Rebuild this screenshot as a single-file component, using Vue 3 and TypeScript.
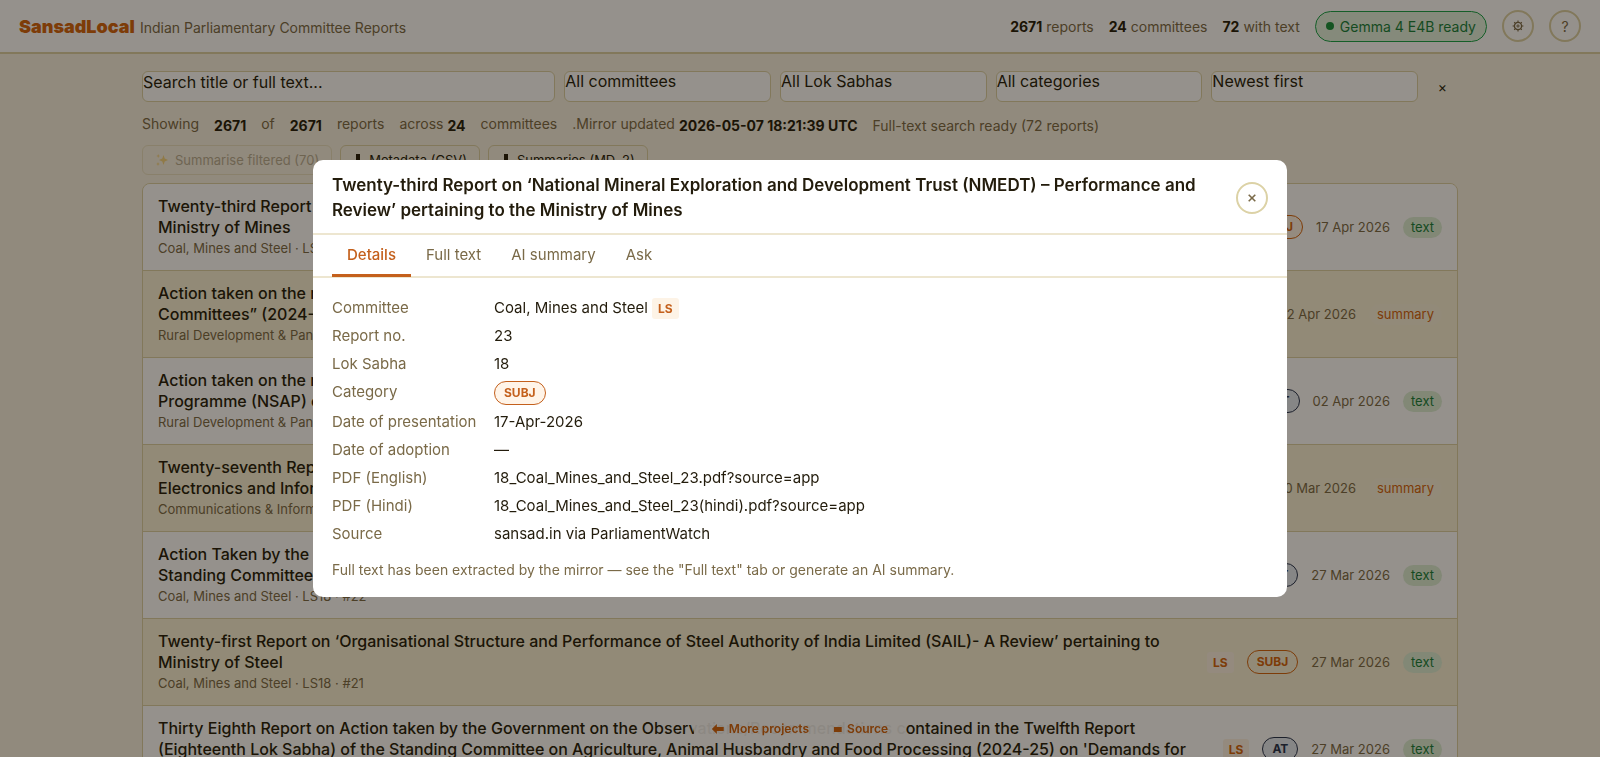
<script setup lang="ts">
import { ref } from 'vue'

interface Report {
  lines: string[]
  meta: string
  category: 'SUBJ' | 'AT'
  date: string
  badge: 'text' | 'summary'
}

const reports: Report[] = [
  {
    lines: ['Twenty-third Report on ‘National Mineral Exploration and Development Trust (NMEDT)', 'Ministry of Mines'],
    meta: 'Coal, Mines and Steel · LS18 · #23', category: 'SUBJ', date: '17 Apr 2026', badge: 'text',
  },
  {
    lines: ['Action taken on the recommendations contained in the Report', 'Committees” (2024-25)'],
    meta: 'Rural Development & Panchayati Raj · LS18', category: 'AT', date: '02 Apr 2026', badge: 'summary',
  },
  {
    lines: ['Action taken on the recommendations contained in the Report', 'Programme (NSAP) of the Ministry'],
    meta: 'Rural Development & Panchayati Raj · LS18', category: 'AT', date: '02 Apr 2026', badge: 'text',
  },
  {
    lines: ['Twenty-seventh Report of the Committee', 'Electronics and Information Technology'],
    meta: 'Communications & Information Technology · LS18', category: 'AT', date: '30 Mar 2026', badge: 'summary',
  },
  {
    lines: ['Action Taken by the Government on the Report', 'Standing Committee on Coal, Mines and Steel'],
    meta: 'Coal, Mines and Steel · LS18 · #22', category: 'AT', date: '27 Mar 2026', badge: 'text',
  },
  {
    lines: ['Twenty-first Report on ‘Organisational Structure and Performance of Steel Authority of India Limited (SAIL)- A Review’ pertaining to', 'Ministry of Steel'],
    meta: 'Coal, Mines and Steel · LS18 · #21', category: 'SUBJ', date: '27 Mar 2026', badge: 'text',
  },
  {
    lines: ['Thirty Eighth Report on Action taken by the Government on the Observations/Recommendations contained in the Twelfth Report', "(Eighteenth Lok Sabha) of the Standing Committee on Agriculture, Animal Husbandry and Food Processing (2024-25) on 'Demands for"],
    meta: 'Agriculture, Animal Husbandry and Food Processing · LS18 · #38', category: 'AT', date: '27 Mar 2026', badge: 'text',
  },
]

const filters = [
  { label: 'Committee', value: 'All committees' },
  { label: 'Lok Sabha', value: 'All Lok Sabhas' },
  { label: 'Category', value: 'All categories' },
  { label: 'Sort order', value: 'Newest first' },
]

const tabs = ['Details', 'Full text', 'AI summary', 'Ask']
const activeTab = ref('Details')
const query = ref('')
</script>

<template>
  <div class="page">
    <header class="topbar">
      <div class="brand">
        <span class="logo">SansadLocal</span>
        <span class="tagline">Indian Parliamentary Committee Reports</span>
      </div>
      <div class="stats">
        <span><b>2671</b> reports</span>
        <span><b>24</b> committees</span>
        <span><b>72</b> with text</span>
        <button class="model" type="button"><i class="dot"></i>Gemma 4 E4B ready</button>
        <button class="round" type="button" aria-label="Settings">
          <svg width="12" height="12" viewBox="0 0 12 12" fill="none" stroke="currentColor">
            <circle cx="6" cy="6" r="3.6" stroke-width="1.3" />
            <circle cx="6" cy="6" r="1.1" stroke-width="1" />
            <path d="M6 .6v1.6M6 9.8v1.6M.6 6h1.6M9.8 6h1.6M2.2 2.2l1.1 1.1M8.7 8.7l1.1 1.1M9.8 2.2L8.7 3.3M3.3 8.7L2.2 9.8" stroke-width="1.1" />
          </svg>
        </button>
        <button class="round" type="button" aria-label="Help">?</button>
      </div>
    </header>

    <main class="content">
      <form class="filters" @submit.prevent>
        <input v-model="query" class="field" type="text" aria-label="Search" placeholder="Search title or full text..." />
        <select v-for="f in filters" :key="f.label" class="field" :aria-label="f.label">
          <option>{{ f.value }}</option>
        </select>
        <button class="clear" type="reset" aria-label="Clear filters">×</button>
      </form>

      <div class="status">
        <span>Showing</span><b>2671</b><span>of</span><b>2671</b><span>reports</span>
        <span class="pair"><span>across</span><b>24</b></span>
        <span>committees</span>
        <span class="pair"><span>.Mirror updated</span><b>2026-05-07 18:21:39 UTC</b></span>
        <span class="hint">Full-text search ready (72 reports)</span>
      </div>

      <div class="actions">
        <button type="button" disabled>
          <svg width="14" height="14" viewBox="0 0 14 14" fill="#f5b921">
            <path d="M8.5 2l1.2 3.6 3.3 1.4-3.3 1.4L8.5 12 7.3 8.4 4 7l3.3-1.4zM3.2 1l.5 1.5 1.3.5-1.3.5-.5 1.5-.5-1.5L1.4 3l1.3-.5zM3 9l.5 1.5 1.3.5-1.3.5L3 13l-.5-1.5-1.3-.5 1.3-.5z" />
          </svg>
          Summarise filtered (70)
        </button>
        <button v-for="a in ['Metadata (CSV)', 'Summaries (MD, 2)']" :key="a" type="button">
          <svg width="10" height="14" viewBox="0 0 10 14" fill="currentColor"><path d="M3 1h4v8h3l-5 5-5-5h3z" /></svg>
          {{ a }}
        </button>
      </div>

      <ul class="list">
        <li v-for="r in reports" :key="r.meta + r.lines[1]" class="row">
          <div class="info">
            <h3><span v-for="line in r.lines" :key="line">{{ line }}</span></h3>
            <p>{{ r.meta }}</p>
          </div>
          <span class="house">LS</span>
          <span class="pill" :class="r.category.toLowerCase()">{{ r.category }}</span>
          <time>{{ r.date }}</time>
          <span class="badge" :class="r.badge">{{ r.badge }}</span>
        </li>
      </ul>
    </main>

    <nav class="links">
      <a href="#projects">
        <svg width="12" height="10" viewBox="0 0 12 10" fill="currentColor"><path d="M0 5l5-5v3h7v4H5v3z" /></svg>
        More projects
      </a>
      <a href="#source">
        <svg width="8" height="10" viewBox="0 0 8 10" fill="currentColor"><path d="M0 3h8v5H0z" /></svg>
        Source
      </a>
    </nav>

    <div class="overlay">
      <section class="modal" role="dialog" aria-modal="true" aria-labelledby="report-title">
        <header class="modal-head">
          <h2 id="report-title">
            Twenty-third Report on ‘National Mineral Exploration and Development Trust (NMEDT) – Performance and<br />
            Review’ pertaining to the Ministry of Mines
          </h2>
          <button class="round" type="button" aria-label="Close">
            <svg width="10" height="10" viewBox="0 0 10 10" stroke="currentColor" stroke-width="1.6"><path d="M1.7 1.7l6.6 6.6M8.3 1.7L1.7 8.3" /></svg>
          </button>
        </header>
        <div class="tabs" role="tablist">
          <button
            v-for="t in tabs" :key="t" type="button" role="tab" :aria-selected="t === activeTab"
            :class="{ active: t === activeTab }" @click="activeTab = t"
          >{{ t }}</button>
        </div>
        <div class="modal-body">
          <dl>
            <dt>Committee</dt><dd>Coal, Mines and Steel <span class="house">LS</span></dd>
            <dt>Report no.</dt><dd>23</dd>
            <dt>Lok Sabha</dt><dd>18</dd>
            <dt>Category</dt><dd><span class="pill subj">SUBJ</span></dd>
            <dt>Date of presentation</dt><dd>17-Apr-2026</dd>
            <dt>Date of adoption</dt><dd>—</dd>
            <dt>PDF (English)</dt><dd><a href="#pdf-en">18_Coal_Mines_and_Steel_23.pdf?source=app</a></dd>
            <dt>PDF (Hindi)</dt><dd><a href="#pdf-hi">18_Coal_Mines_and_Steel_23(hindi).pdf?source=app</a></dd>
            <dt>Source</dt><dd><a href="#sansad">sansad.in via ParliamentWatch</a></dd>
          </dl>
          <p>Full text has been extracted by the mirror — see the "Full text" tab or generate an AI summary.</p>
        </div>
      </section>
    </div>
  </div>
</template>

<style>
body {
  margin: 0;
  background: #f8f2e3;
  overflow: hidden;
}
</style>

<style scoped>
.page {
  --ink: #231c0c;
  --muted: #7a6a48;
  --line: #dcd2a6;
  --orange: #d4640f;
  height: 100vh;
  overflow: hidden;
  background: #f8f2e3;
  color: var(--ink);
  font-family: Inter, "Liberation Sans", sans-serif;
  font-size: 14px;
}
.page *, .page { box-sizing: border-box; }
button, input, select { font: inherit; color: inherit; margin: 0; }
button { cursor: pointer; }
a { color: inherit; text-decoration: none; }
b { font-weight: 700; color: var(--ink); }

.topbar {
  display: flex;
  align-items: center;
  justify-content: space-between;
  height: 54px;
  padding: 0 19px;
  background: #fff;
  border-bottom: 2px solid var(--line);
  color: var(--muted);
}
.brand { display: flex; align-items: baseline; gap: 5px; }
.logo { font-size: 18px; font-weight: 900; color: var(--orange); }
.stats { display: flex; align-items: center; gap: 15px; }
.stats > span { white-space: nowrap; }
.round {
  display: flex;
  align-items: center;
  justify-content: center;
  flex: none;
  width: 32px;
  height: 32px;
  padding: 0;
  border: 2px solid var(--line);
  border-radius: 50%;
  background: #fff;
  color: var(--muted);
}
.model {
  display: flex;
  align-items: center;
  gap: 6px;
  height: 31px;
  padding: 0 10px;
  border: 1px solid #16a34a;
  border-radius: 16px;
  background: #e2f3e0;
  color: #15803d;
}
.dot { width: 8px; height: 8px; border-radius: 50%; background: #15903d; }

.content { width: calc(100% - 48px); max-width: 1316px; margin: 0 auto; padding-top: 17px; }
.filters { display: grid; grid-template-columns: 2fr repeat(4, 1fr) 31px; gap: 9px; }
.field {
  min-width: 0;
  height: 31px;
  padding: 0 0 10px;
  border: 1px solid var(--line);
  border-radius: 6px;
  background: #fff;
  font-size: 16px;
  line-height: 19px;
  appearance: none;
  outline: none;
}
.field::placeholder { color: var(--ink); opacity: 1; }
.clear { border: 0; padding: 0; background: none; }

.status {
  display: flex;
  gap: 15px;
  margin-top: 12px;
  line-height: 20px;
  white-space: nowrap;
  color: var(--muted);
}
.status b, .status .hint { padding-top: 2px; }
.pair { display: flex; gap: 4px; }

.actions { display: flex; gap: 8px; margin-top: 9px; }
.actions button {
  display: flex;
  align-items: center;
  gap: 6px;
  height: 30px;
  padding: 0 12px;
  border: 1px solid var(--line);
  border-radius: 6px;
  background: transparent;
  font-size: 13px;
}
.actions button:disabled { opacity: 0.5; color: var(--muted); }

.list {
  margin: 8px 0 0;
  padding: 0;
  list-style: none;
  border: 1px solid var(--line);
  border-radius: 8px;
  overflow: hidden;
}
.row {
  display: flex;
  align-items: center;
  gap: 13px;
  padding: 12px 15px;
  background: #fff;
  border-bottom: 1px solid var(--line);
}
.row:nth-child(even) { background: #f9f2d9; }
.info { flex: 1; min-width: 0; }
h3 { margin: 0; font-size: 16px; line-height: 21px; font-weight: 500; }
h3 span { display: block; white-space: nowrap; }
.info p { margin: 0; font-size: 13px; line-height: 20px; color: var(--muted); }
time { color: var(--muted); white-space: nowrap; font-size: 13px; }
.house {
  padding: 3px 6px;
  border-radius: 3px;
  background: #fdf3e6;
  color: var(--orange);
  font-size: 12px;
  line-height: 15px;
  font-weight: 700;
}
.pill {
  display: inline-block;
  padding: 0 9px;
  border: 1px solid;
  border-radius: 12px;
  font-size: 12px;
  line-height: 22px;
  font-weight: 700;
}
.pill.subj { background: #fff4e8; color: var(--orange); }
.row:nth-child(even) .pill.subj { background: transparent; }
.pill.at { background: #e4ebf5; color: #24324f; }
.badge { padding: 0 8px; border-radius: 11px; font-size: 13px; line-height: 21px; }
.badge.text { background: #dcefd8; color: #15803d; }
.badge.summary { color: var(--orange); background: #faf3dc; }

.links {
  position: fixed;
  left: 50%;
  bottom: 16px;
  transform: translateX(-50%);
  display: flex;
  gap: 25px;
  padding: 4px 18px;
  background: rgba(255, 255, 255, 0.93);
  color: var(--orange);
  font-size: 12px;
  line-height: 16px;
  font-weight: 600;
  white-space: nowrap;
}
.links a { display: flex; align-items: center; gap: 5px; }

.overlay {
  position: fixed;
  inset: 0;
  display: flex;
  align-items: center;
  justify-content: center;
  background: rgba(20, 10, 0, 0.45);
}
.modal {
  --orange: #c4601c;
  width: calc(100% - 48px);
  max-width: 974px;
  border-radius: 10px;
  background: #fff;
  overflow: hidden;
}
.modal-head {
  display: flex;
  align-items: center;
  justify-content: space-between;
  padding: 13px 19px 10px;
  border-bottom: 2px solid #ede6d0;
}
h2 { margin: 0; font-size: 17px; line-height: 25px; font-weight: 600; white-space: nowrap; }
.tabs { display: flex; height: 43px; padding: 0 19px; border-bottom: 2px solid #ede6d0; }
.tabs button {
  height: 42px;
  padding: 0 15px;
  border: 0;
  border-bottom: 3px solid transparent;
  background: none;
  color: var(--muted);
  font-size: 15px;
}
.tabs .active { color: var(--orange); border-color: var(--orange); font-weight: 500; }
.modal-body { padding: 19px 19px 17px; }
dl {
  display: grid;
  grid-template-columns: 147px 1fr;
  gap: 6px 15px;
  margin: 0;
  font-size: 15px;
  line-height: 22px;
}
dt { color: var(--muted); white-space: nowrap; }
dd { margin: 0; }
dd .pill { vertical-align: top; }
.modal-body p { margin: 15px 0 0; font-size: 14px; line-height: 20px; color: var(--muted); }
</style>
